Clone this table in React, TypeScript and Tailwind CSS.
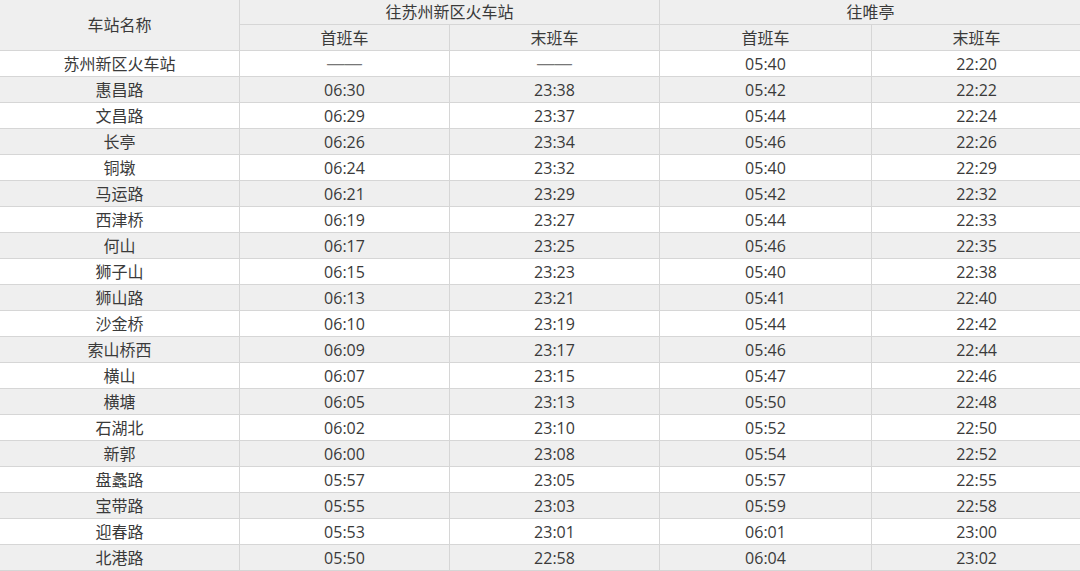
import React from "react";

const rows: [string, string, string, string, string][] = [
  ["苏州新区火车站", "——", "——", "05:40", "22:20"],
  ["惠昌路", "06:30", "23:38", "05:42", "22:22"],
  ["文昌路", "06:29", "23:37", "05:44", "22:24"],
  ["长亭", "06:26", "23:34", "05:46", "22:26"],
  ["铜墩", "06:24", "23:32", "05:40", "22:29"],
  ["马运路", "06:21", "23:29", "05:42", "22:32"],
  ["西津桥", "06:19", "23:27", "05:44", "22:33"],
  ["何山", "06:17", "23:25", "05:46", "22:35"],
  ["狮子山", "06:15", "23:23", "05:40", "22:38"],
  ["狮山路", "06:13", "23:21", "05:41", "22:40"],
  ["沙金桥", "06:10", "23:19", "05:44", "22:42"],
  ["索山桥西", "06:09", "23:17", "05:46", "22:44"],
  ["横山", "06:07", "23:15", "05:47", "22:46"],
  ["横塘", "06:05", "23:13", "05:50", "22:48"],
  ["石湖北", "06:02", "23:10", "05:52", "22:50"],
  ["新郭", "06:00", "23:08", "05:54", "22:52"],
  ["盘蠡路", "05:57", "23:05", "05:57", "22:55"],
  ["宝带路", "05:55", "23:03", "05:59", "22:58"],
  ["迎春路", "05:53", "23:01", "06:01", "23:00"],
  ["北港路", "05:50", "22:58", "06:04", "23:02"],
];

const cell = "border border-[#d6d6d6] text-center align-middle p-0 leading-none";

export default function App() {
  return (
    <div
      className="w-[1080px] h-[571px] overflow-hidden bg-white text-[16px] text-[#3a3a3a]"
      style={{ fontFamily: '"Open Sans", "Noto Sans CJK SC", sans-serif' }}
    >
      <table className="border-collapse table-fixed w-[1082px] -ml-px -mt-px">
        <colgroup>
          <col className="w-[240px]" />
          <col className="w-[210px]" />
          <col className="w-[210px]" />
          <col className="w-[212px]" />
          <col className="w-[210px]" />
        </colgroup>
        <thead className="bg-[#efefef]">
          <tr className="h-[25px]">
            <th rowSpan={2} className={`${cell} font-normal`}>车站名称</th>
            <th colSpan={2} className={`${cell} font-normal`}>往苏州新区火车站</th>
            <th colSpan={2} className={`${cell} font-normal`}>往唯亭</th>
          </tr>
          <tr className="h-[26px]">
            <th className={`${cell} font-normal`}>首班车</th>
            <th className={`${cell} font-normal`}>末班车</th>
            <th className={`${cell} font-normal`}>首班车</th>
            <th className={`${cell} font-normal`}>末班车</th>
          </tr>
        </thead>
        <tbody>
          {rows.map((r, i) => (
            <tr key={r[0]} className={`h-[26px] ${i % 2 === 1 ? "bg-[#efefef]" : "bg-white"}`}>
              {r.map((v, j) => (
                <td key={j} className={cell}>
                  {v === "——" ? (
                    <span className="text-[17.5px] font-['Liberation_Sans',sans-serif] text-[#777]">——</span>
                  ) : (
                    v
                  )}
                </td>
              ))}
            </tr>
          ))}
        </tbody>
      </table>
    </div>
  );
}
